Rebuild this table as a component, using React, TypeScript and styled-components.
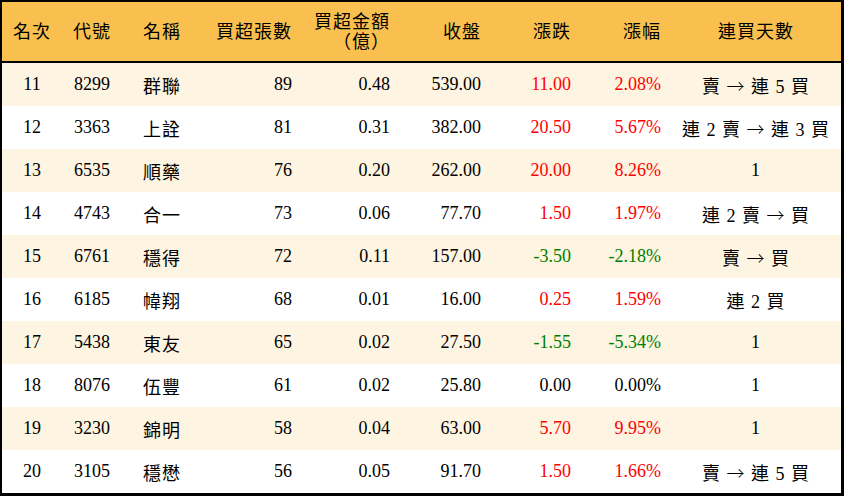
import styled, { createGlobalStyle } from 'styled-components';

const GlobalStyle = createGlobalStyle`
  html, body {
    margin: 0;
    padding: 0;
    background: #ffffff;
  }
  body {
    font-family: 'Liberation Serif', 'Noto Sans CJK TC', serif;
  }
`;

type Align = 'left' | 'center' | 'right';

interface Column {
  title: string;
  align: Align;
}

const columns: Column[] = [
  { title: '名次', align: 'center' },
  { title: '代號', align: 'center' },
  { title: '名稱', align: 'center' },
  { title: '買超張數', align: 'right' },
  { title: '買超金額（億）', align: 'right' },
  { title: '收盤', align: 'right' },
  { title: '漲跌', align: 'right' },
  { title: '漲幅', align: 'right' },
  { title: '連買天數', align: 'center' },
];

const rows = [
  ['11', '8299', '群聯', '89', '0.48', '539.00', '11.00', '2.08%', '賣 → 連 5 買'],
  ['12', '3363', '上詮', '81', '0.31', '382.00', '20.50', '5.67%', '連 2 賣 → 連 3 買'],
  ['13', '6535', '順藥', '76', '0.20', '262.00', '20.00', '8.26%', '1'],
  ['14', '4743', '合一', '73', '0.06', '77.70', '1.50', '1.97%', '連 2 賣 → 買'],
  ['15', '6761', '穩得', '72', '0.11', '157.00', '-3.50', '-2.18%', '賣 → 買'],
  ['16', '6185', '幃翔', '68', '0.01', '16.00', '0.25', '1.59%', '連 2 買'],
  ['17', '5438', '東友', '65', '0.02', '27.50', '-1.55', '-5.34%', '1'],
  ['18', '8076', '伍豐', '61', '0.02', '25.80', '0.00', '0.00%', '1'],
  ['19', '3230', '錦明', '58', '0.04', '63.00', '5.70', '9.95%', '1'],
  ['20', '3105', '穩懋', '56', '0.05', '91.70', '1.50', '1.66%', '賣 → 連 5 買'],
];

const GRID = '60px 60px 80px 100px 98px 91px 90px 90px 1fr';

const Frame = styled.div`
  box-sizing: border-box;
  width: 844px;
  border-style: solid;
  border-color: #000000;
  border-width: 2px 3px 3px 2px;
  color: #000000;
`;

const HeaderRow = styled.div`
  display: grid;
  grid-template-columns: ${GRID};
  height: 59px;
  background: #f9c04f;
  border-bottom: 2px solid #000000;
`;

const HeaderCell = styled.div<{ $align: Align }>`
  display: flex;
  align-items: center;
  justify-content: ${p => (p.$align === 'right' ? 'flex-end' : p.$align === 'left' ? 'flex-start' : 'center')};
  text-align: ${p => p.$align};
  padding: 0 10px;
  font-size: 18px;
  line-height: 20px;
  letter-spacing: 1px;
  box-sizing: border-box;
`;

const Row = styled.div<{ $alt: boolean }>`
  display: grid;
  grid-template-columns: ${GRID};
  height: 43px;
  background: ${p => (p.$alt ? '#fdf4e1' : '#ffffff')};
`;

const Cell = styled.div<{ $align: Align; $tone?: string; $cjk?: boolean }>`
  display: flex;
  align-items: center;
  justify-content: ${p => (p.$align === 'right' ? 'flex-end' : p.$align === 'left' ? 'flex-start' : 'center')};
  padding: 0 10px;
  font-size: 18px;
  white-space: pre;
  color: ${p => p.$tone ?? '#000000'};
  letter-spacing: ${p => (p.$cjk ? '1px' : '0')};
  box-sizing: border-box;
`;

const Arrow = styled.span`
  font-family: 'Noto Sans CJK TC', sans-serif;
  font-weight: 300;
`;

const toneOf = (v: string) => {
  if (v.startsWith('-')) return '#008000';
  if (/^0\.00/.test(v)) return '#000000';
  return '#ff0000';
};

const renderDays = (v: string) =>
  v.split('→').flatMap((part, k) => (k === 0 ? [part] : [<Arrow key={k}>→</Arrow>, part]));

export default function App() {
  return (
    <>
      <GlobalStyle />
      <Frame>
        <HeaderRow>
          {columns.map(c => (
            <HeaderCell key={c.title} $align={c.align}>
              {c.title}
            </HeaderCell>
          ))}
        </HeaderRow>
        {rows.map((r, i) => (
          <Row key={r[0]} $alt={i % 2 === 0}>
            {r.map((v, j) => (
              <Cell
                key={j}
                $align={columns[j].align}
                $tone={j === 6 || j === 7 ? toneOf(v) : undefined}
                $cjk={j === 2 || j === 8}
              >
                {j === 8 ? renderDays(v) : v}
              </Cell>
            ))}
          </Row>
        ))}
      </Frame>
    </>
  );
}
